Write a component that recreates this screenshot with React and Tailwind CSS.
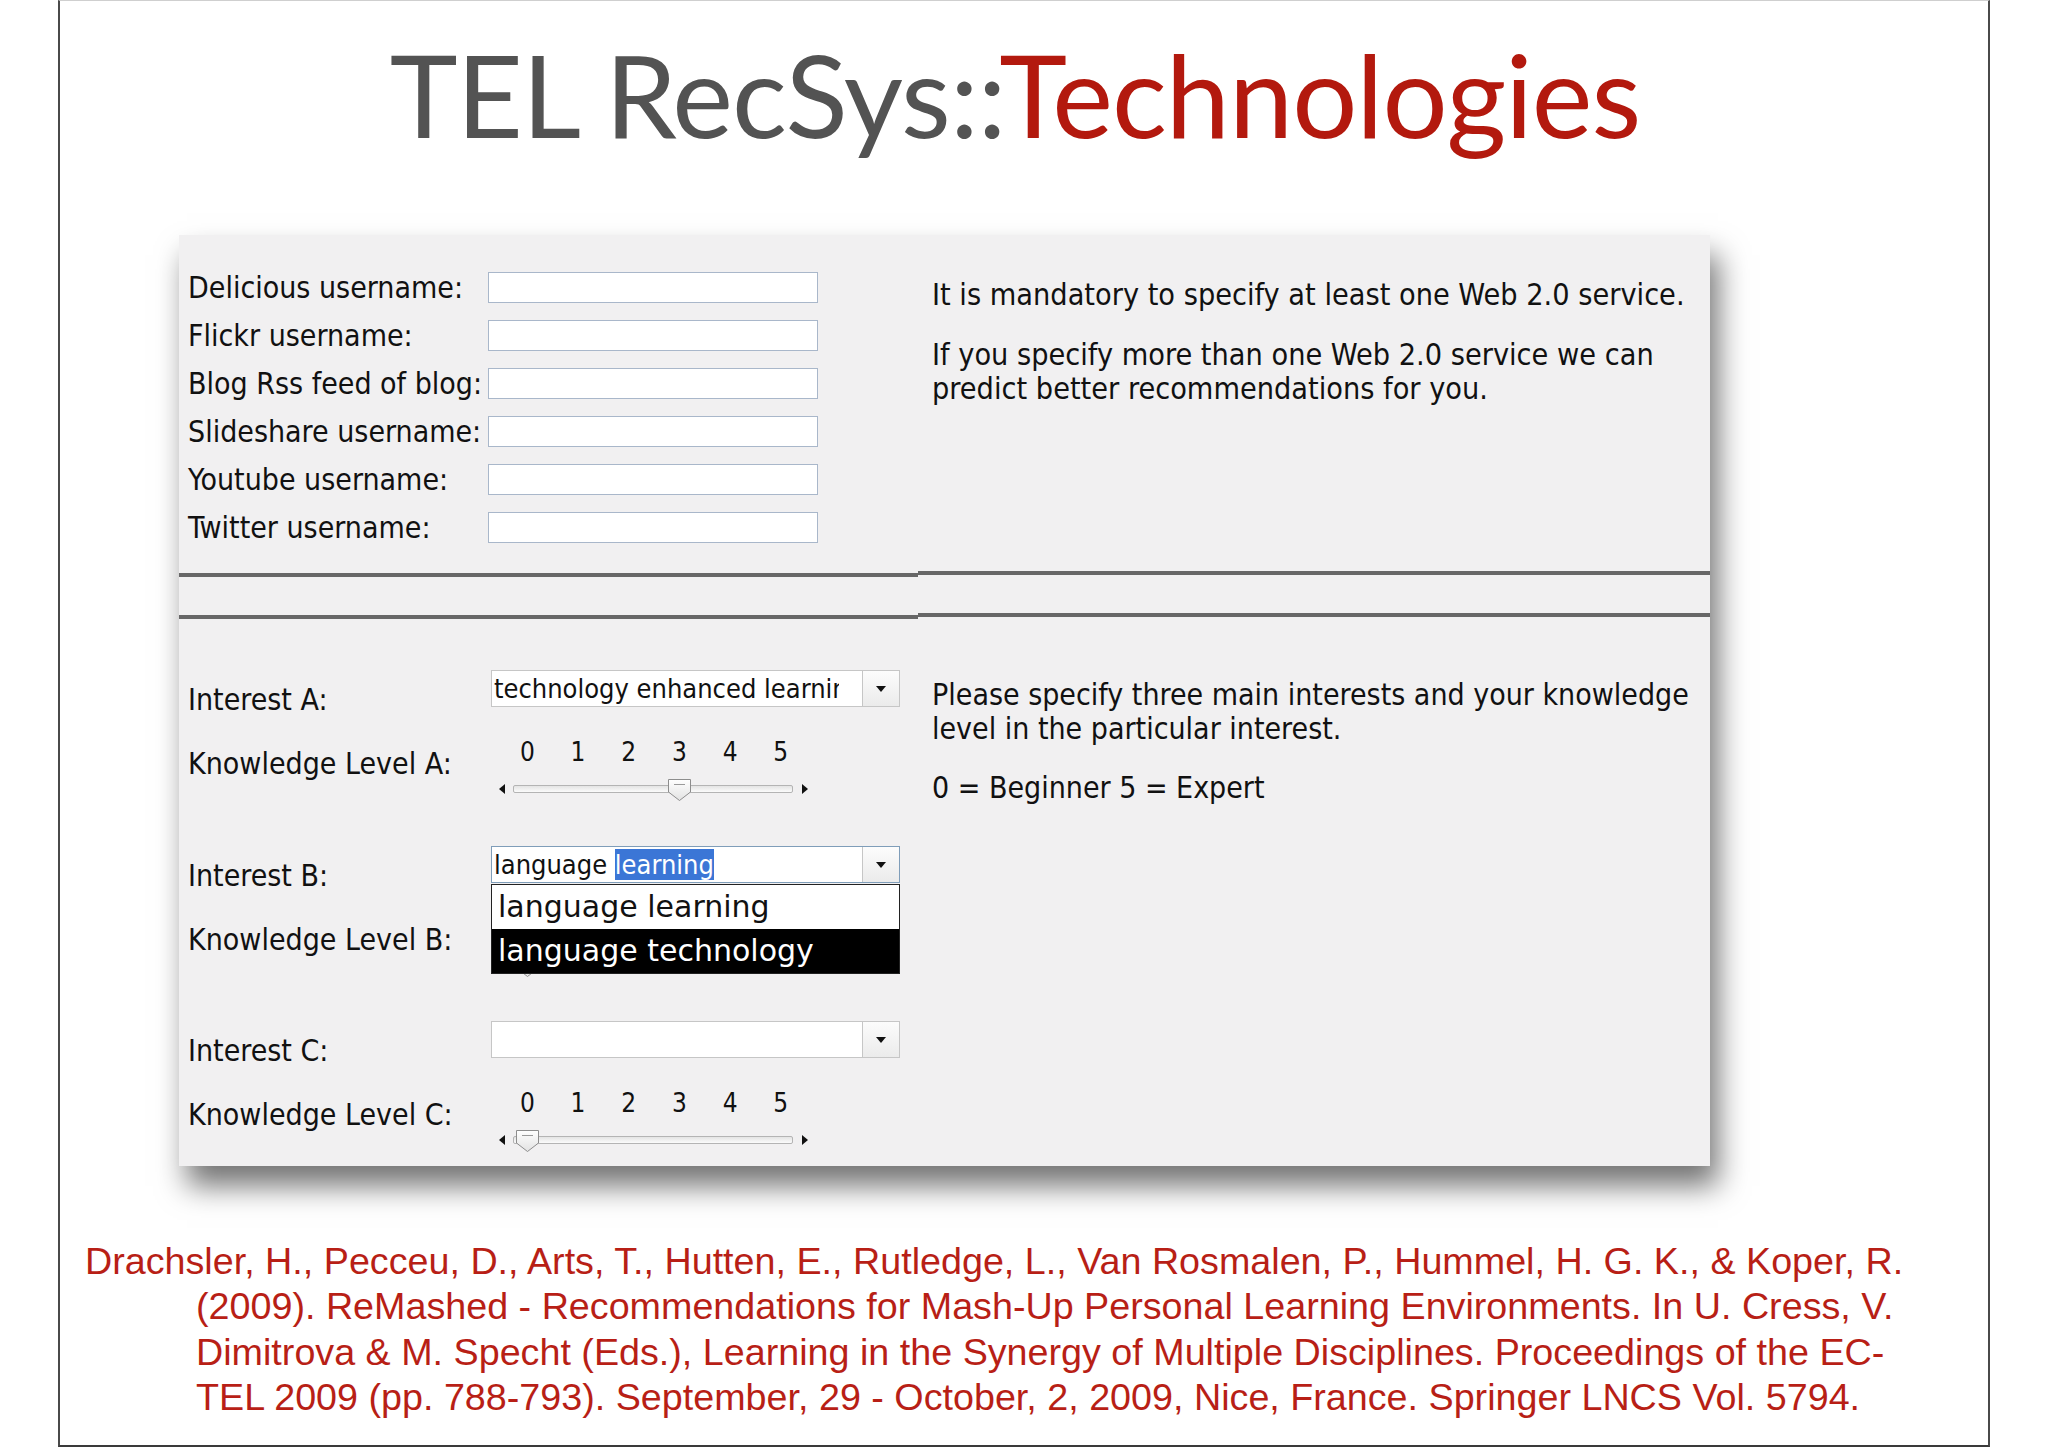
import React from "react";

const UI = "font-['DejaVu_Sans_Condensed','DejaVu_Sans',sans-serif]";

function Arrow() {
  return (
    <svg width="10" height="6" viewBox="0 0 10 6">
      <path d="M0 0 H10 L5 6 Z" fill="#111" />
    </svg>
  );
}

function Combo({ children, focused }) {
  return (
    <div
      className={`flex w-[409px] h-[37px] bg-white border ${
        focused ? "border-[#7f9db9]" : "border-[#c6c6c6]"
      }`}
    >
      <div className={`flex-1 mr-[23px] overflow-hidden whitespace-nowrap pl-[2px] text-[27px] leading-[35px] text-[#111] ${UI}`}>
        {children}
      </div>
      <div className="w-[37px] flex items-center justify-center border-l border-[#c6c6c6] bg-gradient-to-b from-[#fcfcfc] to-[#ebebeb]">
        <Arrow />
      </div>
    </div>
  );
}

function Slider({ value, hideNumbers }) {
  const left = 15.5 + value * 50.7;
  return (
    <div className="ml-[9px] w-[312px] mt-[30px]">
      <div
        className={`flex pl-[2px] text-[26px] leading-[30px] text-[#111] ${UI} ${
          hideNumbers ? "invisible" : ""
        }`}
      >
        {[0, 1, 2, 3, 4, 5].map((n) => (
          <div key={n} className="w-[50.7px] text-center">
            {n}
          </div>
        ))}
      </div>
      <div className="relative h-[24px] mt-[10px] flex items-center">
        <svg width="6" height="10" viewBox="0 0 6 10" className="ml-[-1px]">
          <path d="M6 0 V10 L0 5 Z" fill="#111" />
        </svg>
        <div className="ml-[8px] w-[280px] h-[8px] rounded-[2px] border border-[#b4b4b4] bg-gradient-to-b from-[#e4e4e4] to-[#fbfbfb]" />
        <svg width="6" height="10" viewBox="0 0 6 10" className="ml-[9px]">
          <path d="M0 0 V10 L6 5 Z" fill="#111" />
        </svg>
        <svg
          width="23"
          height="22"
          viewBox="0 0 23 22"
          className="absolute top-[2px]"
          style={{ left: `${left}px` }}
        >
          <defs>
            <linearGradient id="tg" x1="0" y1="0" x2="0" y2="1">
              <stop offset="0" stopColor="#ffffff" />
              <stop offset="1" stopColor="#e2e2e2" />
            </linearGradient>
          </defs>
          <path d="M0.5 0.5 H22.5 V13 L11.5 21.5 L0.5 13 Z" fill="url(#tg)" stroke="#8d8d8d" />
          <path d="M6 5.5 H17" stroke="#9a9a9a" />
        </svg>
      </div>
    </div>
  );
}

function InterestBlock({ letter, value, combo, focused, overlay, heightClass }) {
  return (
    <div className={`flex ${heightClass}`}>
      <div className={`w-[312px] pl-[9px] text-[30px] leading-[34px] text-[#111] ${UI}`}>
        <div className="mt-[13px] whitespace-nowrap">Interest {letter}:</div>
        <div className="mt-[30px] whitespace-nowrap">Knowledge Level {letter}:</div>
      </div>
      <div className="relative">
        <Combo focused={focused}>{combo}</Combo>
        <Slider value={value} hideNumbers={!!overlay} />
        {overlay}
      </div>
    </div>
  );
}

function Dropdown() {
  return (
    <div className="absolute left-0 top-[38px] w-[409px] border border-[#222] bg-white font-['DejaVu_Sans',sans-serif] text-[30px]">
      <div className="h-[44px] leading-[44px] pl-[6px] text-[#111] bg-white">language learning</div>
      <div className="h-[44px] leading-[44px] pl-[6px] text-white bg-black">language technology</div>
    </div>
  );
}

const fields = [
  "Delicious username:",
  "Flickr username:",
  "Blog Rss feed of blog:",
  "Slideshare username:",
  "Youtube username:",
  "Twitter username:",
];

export default function App() {
  return (
    <div className="w-[2048px] h-[1447px] bg-white overflow-hidden">
      <div className="ml-[58px] w-[1932px] h-[1447px] border-x-2 border-b-2 border-t border-x-[#4a4a4a] border-b-[#3a3a3a] border-t-[#cfcfcf] flex flex-col">
        {/* Title */}
        <div className="h-[234px] pt-[35px] pr-[18px] flex justify-center">
          <div className="font-['Lato',sans-serif] text-[115px] leading-none tracking-[-1px] whitespace-nowrap">
            <span className="text-[#535353]">TEL RecSys::</span>
            <span className="text-[#b3190e]">Technologies</span>
          </div>
        </div>

        {/* Panel */}
        <div className="ml-[119px] w-[1531px] h-[931px] bg-[#f1f0f1] shadow-[8px_20px_28px_rgba(0,0,0,0.55)] flex flex-col">
          {/* Top section */}
          <div className="flex h-[336px]">
            <div className="w-[739px] pt-[28px] pl-[9px]">
              {fields.map((f) => (
                <div key={f} className="flex items-center h-[48px]">
                  <div className={`w-[300px] whitespace-nowrap text-[30px] text-[#111] ${UI}`}>{f}</div>
                  <div className="w-[330px] h-[31px] bg-white border border-[#a9b7ca]" />
                </div>
              ))}
            </div>
            <div className={`flex-1 pl-[14px] pt-[43px] text-[30.3px] leading-[34px] text-[#111] ${UI}`}>
              <p className="whitespace-nowrap">It is mandatory to specify at least one Web 2.0 service.</p>
              <p className="mt-[26px] whitespace-nowrap">If you specify more than one Web 2.0 service we can</p>
              <p className="whitespace-nowrap">predict better recommendations for you.</p>
            </div>
          </div>

          {/* Dividers */}
          <div className="flex items-start h-[6px]">
            <div className="w-[739px] h-[4px] mt-[2px] bg-[#676767]" />
            <div className="flex-1 h-[4px] bg-[#676767]" />
          </div>
          <div className="h-[36px]" />
          <div className="flex items-start h-[6px]">
            <div className="w-[739px] h-[4px] mt-[2px] bg-[#676767]" />
            <div className="flex-1 h-[4px] bg-[#676767]" />
          </div>

          {/* Bottom section */}
          <div className="flex flex-1 overflow-hidden">
            <div className="w-[739px] pt-[51px]">
              <InterestBlock
                letter="A"
                value={3}
                heightClass="h-[176px]"
                combo="technology enhanced learning"
              />
              <InterestBlock
                letter="B"
                value={0}
                focused
                heightClass="h-[175px]"
                combo={
                  <>
                    language <span className="bg-[#3b76d6] text-white">learning</span>
                  </>
                }
                overlay={<Dropdown />}
              />
              <InterestBlock letter="C" value={0} heightClass="h-[150px]" combo="" />
            </div>
            <div className={`flex-1 pl-[14px] pt-[59px] text-[30px] leading-[34px] text-[#111] ${UI}`}>
              <p className="whitespace-nowrap">Please specify three main interests and your knowledge</p>
              <p className="whitespace-nowrap">level in the particular interest.</p>
              <p className="mt-[25px] whitespace-nowrap">0 = Beginner 5 = Expert</p>
            </div>
          </div>
        </div>

        {/* Citation */}
        <div className="mt-[73px] font-['Liberation_Sans',Arial,sans-serif] text-[37.7px] leading-[45.3px] text-[#b81f16] whitespace-nowrap">
          <div className="pl-[25px]">
            Drachsler, H., Pecceu, D., Arts, T., Hutten, E., Rutledge, L., Van Rosmalen, P., Hummel, H. G. K., &amp; Koper, R.
          </div>
          <div className="pl-[136px]">
            (2009). ReMashed - Recommendations for Mash-Up Personal Learning Environments. In U. Cress, V.
          </div>
          <div className="pl-[136px]">
            Dimitrova &amp; M. Specht (Eds.), Learning in the Synergy of Multiple Disciplines. Proceedings of the EC-
          </div>
          <div className="pl-[136px]">
            TEL 2009 (pp. 788-793). September, 29 - October, 2, 2009, Nice, France. Springer LNCS Vol. 5794.
          </div>
        </div>
      </div>
    </div>
  );
}
